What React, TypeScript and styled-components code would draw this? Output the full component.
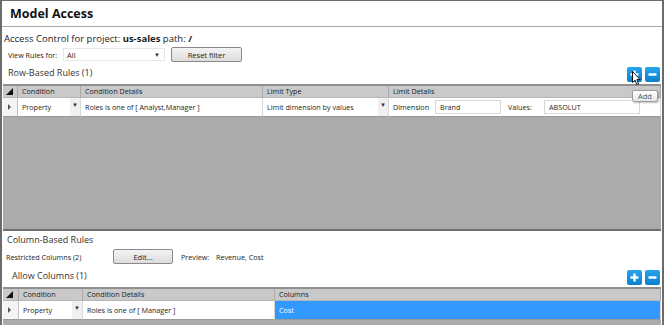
import React from 'react'
import styled, { createGlobalStyle } from 'styled-components'

const GlobalStyle = createGlobalStyle`
  html, body {
    margin: 0;
    padding: 0;
    background: #ffffff;
  }
  body {
    font-family: 'Open Sans', 'Noto Sans', sans-serif;
    color: #1e1e1e;
  }
  * {
    box-sizing: border-box;
  }
`

const Window = styled.div`
  position: relative;
  width: 664px;
  height: 325px;
  overflow: hidden;
  border-top: 1px solid #6c6c6c;
  border-left: 2px solid #6c6c6c;
  border-right: 2px solid #6c6c6c;
  background: #ffffff;
  display: flex;
  flex-direction: column;
`

const TitleBar = styled.div`
  height: 26px;
  flex: none;
  display: flex;
  align-items: center;
  padding-left: 8px;
  border-bottom: 1px solid #a8a8a8;
`

const Title = styled.h1`
  margin: 0;
  font-size: 12.5px;
  font-weight: 700;
  color: #111;
`

const InfoLine = styled.div`
  margin-top: 6px;
  padding-left: 2px;
  font-size: 9.5px;
  line-height: 12px;
  color: #222;

  b {
    font-weight: 700;
  }
`

const FilterRow = styled.div`
  margin-top: 2px;
  padding-left: 6px;
  display: flex;
  align-items: center;
  height: 15px;
`

const SmallLabel = styled.span<{ width?: number }>`
  font-size: 7.2px;
  color: #222;
  width: ${({ width }) => (width ? `${width}px` : 'auto')};
  flex: none;
  white-space: nowrap;
`

const Select = styled.div`
  width: 102px;
  height: 13px;
  border: 1px solid #e6e6e6;
  background: #fff;
  display: flex;
  align-items: center;
  justify-content: space-between;
  padding: 0 4px 0 3px;
  font-size: 7.5px;
  color: #222;
`

const Caret = styled.span`
  font-size: 6px;
  color: #333;
`

const PushButton = styled.div<{ width: number }>`
  width: ${({ width }) => width}px;
  height: 15px;
  border: 1px solid #8a8a8a;
  border-radius: 2px;
  background: linear-gradient(#f4f4f4, #dcdcdc);
  display: flex;
  align-items: center;
  justify-content: center;
  font-size: 7.5px;
  color: #222;
  flex: none;
`

const SectionHeader = styled.div<{ indent: number; top: number; height: number }>`
  display: flex;
  align-items: flex-start;
  justify-content: space-between;
  height: ${({ height }) => height}px;
  margin-top: ${({ top }) => top}px;
  padding-left: ${({ indent }) => indent}px;
  padding-right: 2px;
  flex: none;
`

const SectionTitle = styled.span<{ lineHeight: number }>`
  font-size: 9px;
  line-height: ${({ lineHeight }) => lineHeight}px;
  color: #333;
`

const IconButtons = styled.div`
  display: flex;
  gap: 3px;
  margin-top: 4px;
  position: relative;
`

const IconButton = styled.div`
  width: 15px;
  height: 15px;
  border-radius: 2px;
  background: linear-gradient(#2aa4ec, #0b7fcf);
  display: flex;
  align-items: center;
  justify-content: center;
`

const Grid = styled.div<{ columns: string }>`
  margin-left: 1px;
  width: 658px;
  display: grid;
  grid-template-columns: ${({ columns }) => columns};
  grid-auto-rows: min-content;
  border-top: 2px solid #8f8f8f;
  background: #ababab;
  flex: none;
`

const HeaderCell = styled.div`
  height: 12px;
  background: #c9c9c9;
  border-right: 1px solid #a9a9a9;
  border-bottom: 1px solid #b6b6b6;
  font-size: 7.2px;
  line-height: 11px;
  padding-left: 4px;
  color: #222;
  white-space: nowrap;
  overflow: hidden;
`

const Corner = styled.div`
  height: 12px;
  background: #c9c9c9;
  border-right: 1px solid #a9a9a9;
  border-bottom: 1px solid #b6b6b6;
  position: relative;

  &::after {
    content: '';
    position: absolute;
    left: 3px;
    top: 2px;
    border-left: 7px solid transparent;
    border-bottom: 7px solid #111;
  }
`

const RowHead = styled.div`
  height: 19px;
  background: #f4f4f4;
  border-right: 1px solid #c4c4c4;
  border-bottom: 1px solid #9a9a9a;
  position: relative;

  &::after {
    content: '';
    position: absolute;
    left: 5px;
    top: 6px;
    border-top: 3px solid transparent;
    border-bottom: 3px solid transparent;
    border-left: 3px solid #555;
  }
`

const Cell = styled.div<{ selected?: boolean }>`
  height: 19px;
  display: flex;
  align-items: center;
  background: ${({ selected }) => (selected ? '#3399ff' : '#ffffff')};
  color: ${({ selected }) => (selected ? '#ffffff' : '#1e1e1e')};
  border-right: 1px solid #d8d8d8;
  border-bottom: 1px solid #9a9a9a;
  font-size: 7.2px;
  padding-left: 4px;
  white-space: nowrap;
  overflow: hidden;
`

const CellText = styled.span`
  flex: 1;
`

const DropPart = styled.span`
  width: 10px;
  height: 18px;
  background: #f0f0f0;
  display: flex;
  align-items: flex-start;
  justify-content: center;
  padding-top: 3px;
  font-size: 6px;
  color: #333;
  flex: none;
`

const FieldLabel = styled.span<{ width: number }>`
  width: ${({ width }) => width}px;
  flex: none;
`

const TextBox = styled.span<{ width: number }>`
  width: ${({ width }) => width}px;
  height: 14px;
  border: 1px solid #d6d6d6;
  padding-left: 4px;
  display: flex;
  align-items: center;
  flex: none;
`

const Filler = styled.div<{ height: number }>`
  grid-column: 1 / -1;
  height: ${({ height }) => height}px;
  background: #ababab;
`

const GridBottom = styled.div`
  height: 2px;
  margin-left: 1px;
  width: 658px;
  background: #6f6f6f;
  flex: none;
`

const InlineRow = styled.div`
  display: flex;
  align-items: center;
  height: 15px;
  padding-left: 4px;
  flex: none;
`

const Gap = styled.span<{ width: number }>`
  width: ${({ width }) => width}px;
  flex: none;
`

const Tooltip = styled.div`
  position: absolute;
  left: 5px;
  top: 23px;
  width: 26px;
  height: 12px;
  background: linear-gradient(#ffffff, #e6e6e6);
  border: 1px solid #9c9c9c;
  border-radius: 2px;
  box-shadow: 1px 1px 2px rgba(0, 0, 0, 0.25);
  font-size: 7.5px;
  color: #555;
  display: flex;
  align-items: center;
  justify-content: center;
  z-index: 2;
`

const Cursor = styled.svg`
  position: absolute;
  left: 5px;
  top: 4px;
  z-index: 3;
`

const Plus = () => (
  <svg width="9" height="9" viewBox="0 0 9 9">
    <rect x="3.3" y="0.5" width="2.4" height="8" fill="#fff" />
    <rect x="0.5" y="3.3" width="8" height="2.4" fill="#fff" />
  </svg>
)

const Minus = () => (
  <svg width="9" height="9" viewBox="0 0 9 9">
    <rect x="0.5" y="3.3" width="8" height="2.4" fill="#fff" />
  </svg>
)

const AddRemove: React.FC<{ hovered?: boolean }> = ({ hovered }) => (
  <IconButtons>
    <IconButton>
      <Plus />
    </IconButton>
    <IconButton>
      <Minus />
    </IconButton>
    {hovered && (
      <>
        <Cursor width="10" height="15" viewBox="0 0 10 15">
          <path
            d="M0.5 0.5 L0.5 11.5 L3 9.2 L4.8 13.5 L6.6 12.7 L4.8 8.6 L8.2 8.6 Z"
            fill="#fff"
            stroke="#000"
            strokeWidth="0.9"
            strokeLinejoin="round"
          />
        </Cursor>
        <Tooltip>Add</Tooltip>
      </>
    )}
  </IconButtons>
)

export default function App() {
  return (
    <>
      <GlobalStyle />
      <Window>
        <TitleBar>
          <Title>Model Access</Title>
        </TitleBar>

        <InfoLine>
          Access Control for project: <b>us-sales</b> path: <b>/</b>
        </InfoLine>

        <FilterRow>
          <SmallLabel width={55}>View Rules for:</SmallLabel>
          <Select>
            <span>All</span>
            <Caret>▼</Caret>
          </Select>
          <Gap width={6} />
          <PushButton width={71}>Reset filter</PushButton>
        </FilterRow>

        <SectionHeader indent={6} top={1} height={21}>
          <SectionTitle lineHeight={19}>Row-Based Rules (1)</SectionTitle>
          <AddRemove hovered />
        </SectionHeader>

        <Grid columns="15px 63px 182px 126px 1fr">
          <Corner />
          <HeaderCell>Condition</HeaderCell>
          <HeaderCell>Condition Details</HeaderCell>
          <HeaderCell>Limit Type</HeaderCell>
          <HeaderCell>Limit Details</HeaderCell>

          <RowHead />
          <Cell>
            <CellText>Property</CellText>
            <DropPart>▼</DropPart>
          </Cell>
          <Cell>Roles is one of [ Analyst,Manager ]</Cell>
          <Cell>
            <CellText>Limit dimension by values</CellText>
            <DropPart>▼</DropPart>
          </Cell>
          <Cell>
            <FieldLabel width={42}>Dimension</FieldLabel>
            <TextBox width={66}>Brand</TextBox>
            <Gap width={7} />
            <FieldLabel width={36}>Values:</FieldLabel>
            <TextBox width={96}>ABSOLUT</TextBox>
          </Cell>

          <Filler height={112} />
        </Grid>
        <GridBottom />

        <SectionHeader indent={5} top={0} height={18}>
          <SectionTitle lineHeight={18}>Column-Based Rules</SectionTitle>
        </SectionHeader>

        <InlineRow>
          <SmallLabel width={107}>Restricted Columns (2)</SmallLabel>
          <PushButton width={60}>Edit...</PushButton>
          <Gap width={8} />
          <SmallLabel width={35}>Preview:</SmallLabel>
          <SmallLabel>Revenue, Cost</SmallLabel>
        </InlineRow>

        <SectionHeader indent={10} top={2} height={21}>
          <SectionTitle lineHeight={19}>Allow Columns (1)</SectionTitle>
          <AddRemove />
        </SectionHeader>

        <Grid columns="16px 64px 192px 1fr">
          <Corner />
          <HeaderCell>Condition</HeaderCell>
          <HeaderCell>Condition Details</HeaderCell>
          <HeaderCell>Columns</HeaderCell>

          <RowHead />
          <Cell>
            <CellText>Property</CellText>
            <DropPart>▼</DropPart>
          </Cell>
          <Cell>Roles is one of [ Manager ]</Cell>
          <Cell selected>Cost</Cell>

          <Filler height={10} />
        </Grid>
      </Window>
    </>
  )
}
